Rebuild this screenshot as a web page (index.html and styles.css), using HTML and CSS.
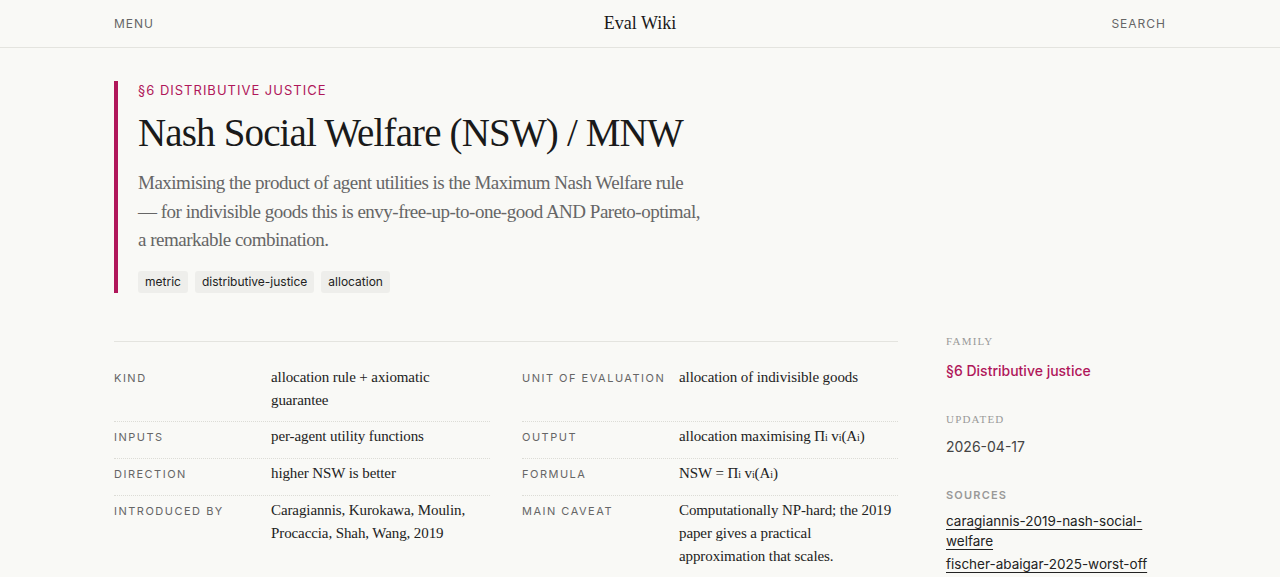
FILE: index.html
```
<!DOCTYPE html>
<html lang="en">
<head>
    <meta charset="UTF-8">
    <title>Nash Social Welfare (NSW) / MNW · Eval Wiki</title>
    <link rel="stylesheet" href="styles.css">
</head>
<body>
    <header class="topbar">
        <div class="topbar-inner">
            <a class="nav-link" href="#">Menu</a>
            <a class="brand" href="#">Eval Wiki</a>
            <a class="nav-link right" href="#">Search</a>
        </div>
    </header>

    <main class="page">
        <section class="hero">
            <div class="eyebrow">§6 Distributive justice</div>
            <h1>Nash Social Welfare (NSW) / MNW</h1>
            <p class="lead">Maximising the product of agent utilities is the Maximum Nash Welfare rule —&nbsp;for indivisible goods this is envy-free-up-to-one-good AND Pareto-optimal, a remarkable combination.</p>
            <div class="tags">
                <span class="tag">metric</span>
                <span class="tag">distributive-justice</span>
                <span class="tag">allocation</span>
            </div>
        </section>

        <div class="layout">
            <div class="facts">
                <div class="fact">
                    <div class="fact-label">Kind</div>
                    <div class="fact-value">allocation rule + axiomatic guarantee</div>
                </div>
                <div class="fact">
                    <div class="fact-label">Unit of evaluation</div>
                    <div class="fact-value">allocation of indivisible goods</div>
                </div>
                <div class="fact">
                    <div class="fact-label">Inputs</div>
                    <div class="fact-value">per-agent utility functions</div>
                </div>
                <div class="fact">
                    <div class="fact-label">Output</div>
                    <div class="fact-value">allocation maximising Π<sub>i</sub> v<sub>i</sub>(A<sub>i</sub>)</div>
                </div>
                <div class="fact">
                    <div class="fact-label">Direction</div>
                    <div class="fact-value">higher NSW is better</div>
                </div>
                <div class="fact">
                    <div class="fact-label">Formula</div>
                    <div class="fact-value">NSW = Π<sub>i</sub> v<sub>i</sub>(A<sub>i</sub>)</div>
                </div>
                <div class="fact">
                    <div class="fact-label">Introduced by</div>
                    <div class="fact-value">Caragiannis, Kurokawa, Moulin, Procaccia, Shah, Wang, 2019</div>
                </div>
                <div class="fact">
                    <div class="fact-label">Main caveat</div>
                    <div class="fact-value">Computationally NP-hard; the 2019 paper gives a practical approximation that scales.</div>
                </div>
            </div>

            <aside class="sidebar">
                <div class="side-block">
                    <div class="side-title">Family</div>
                    <a class="family-link" href="#">§6 Distributive justice</a>
                </div>
                <div class="side-block">
                    <div class="side-title">Updated</div>
                    <div class="side-text">2026-04-17</div>
                </div>
                <div class="side-block">
                    <div class="side-title sans">Sources</div>
                    <a class="source-link" href="#">caragiannis-2019-nash-social-welfare</a>
                    <a class="source-link" href="#">fischer-abaigar-2025-worst-off</a>
                </div>
            </aside>
        </div>
    </main>
</body>
</html>
```

FILE: styles.css
```
body {
    margin: 0;
    background-color: #f9f9f6;
    color: #222;
    font-family: Inter, "Liberation Sans", sans-serif;
}
a {
    color: inherit;
    text-decoration: none;
}

/* top navigation */
.topbar {
    border-bottom: 1px solid #e4e4df;
}
.topbar-inner {
    max-width: 1052px;
    margin: 0 auto;
    height: 47px;
    display: grid;
    grid-template-columns: 1fr auto 1fr;
    align-items: center;
}
.nav-link {
    font-size: 12px;
    letter-spacing: 1px;
    text-transform: uppercase;
    color: #666;
}
.nav-link.right {
    justify-self: end;
}
.brand {
    font-family: "Liberation Serif", serif;
    font-size: 18px;
    color: #1a1a1a;
}

.page {
    max-width: 1052px;
    margin: 0 auto;
}

/* hero */
.hero {
    margin-top: 33px;
    border-left: 4px solid #b0175a;
    padding-left: 20px;
}
.eyebrow {
    font-size: 13px;
    letter-spacing: 1px;
    text-transform: uppercase;
    color: #b0175a;
    line-height: 18px;
}
h1 {
    font-family: "Liberation Serif", serif;
    font-weight: normal;
    font-size: 39px;
    line-height: 48px;
    color: #1a1a1a;
    margin: 10px 0 12px;
    letter-spacing: -0.85px;
}
.lead {
    font-family: "Liberation Serif", serif;
    font-size: 19px;
    line-height: 28.5px;
    color: #666;
    max-width: 568px;
    margin: 0 0 16px;
    letter-spacing: -0.5px;
}
.tags {
    display: flex;
    gap: 7px;
}
.tag {
    font-size: 12px;
    line-height: 14px;
    padding: 4px 7px;
    background-color: #eeeeeb;
    border-radius: 3px;
    color: #222;
}

/* facts + sidebar */
.layout {
    display: grid;
    grid-template-columns: 784px 220px;
    column-gap: 48px;
    margin-top: 48px;
}
.facts {
    border-top: 1px solid #e4e4df;
    padding-top: 21px;
    display: grid;
    grid-template-columns: 1fr 1fr;
    column-gap: 32px;
    align-content: start;
}
.fact {
    display: grid;
    grid-template-columns: 157px 1fr;
    padding: 3px 0 9px;
    border-top: 1px dotted #dcdcd6;
}
.fact:nth-child(-n+2) {
    border-top: none;
}
.fact-label {
    font-size: 11px;
    letter-spacing: 1.5px;
    text-transform: uppercase;
    color: #666;
    padding-top: 5px;
}
.fact-value {
    font-family: "Liberation Serif", serif;
    font-size: 15px;
    line-height: 23px;
    letter-spacing: -0.1px;
    color: #222;
}
.fact-value sub {
    font-size: 10px;
    vertical-align: baseline;
}

.side-block {
    margin-bottom: 39px;
}
.side-title {
    font-family: "Liberation Serif", serif;
    font-size: 11px;
    letter-spacing: 1.2px;
    text-transform: uppercase;
    color: #999;
    margin-bottom: 13px;
    margin-top: -6px;
}
.side-title.sans {
    font-family: Inter, "Liberation Sans", sans-serif;
    font-weight: 600;
    color: #999;
    margin-bottom: 9px;
}
.family-link {
    font-size: 14px;
    font-weight: 500;
    color: #b0175a;
}
.side-text {
    font-size: 14px;
    color: #444;
}
.source-link {
    display: block;
    font-size: 13.5px;
    line-height: 20px;
    margin-bottom: 3px;
    color: #222;
    text-decoration: underline;
    text-underline-offset: 3px;
}
```
